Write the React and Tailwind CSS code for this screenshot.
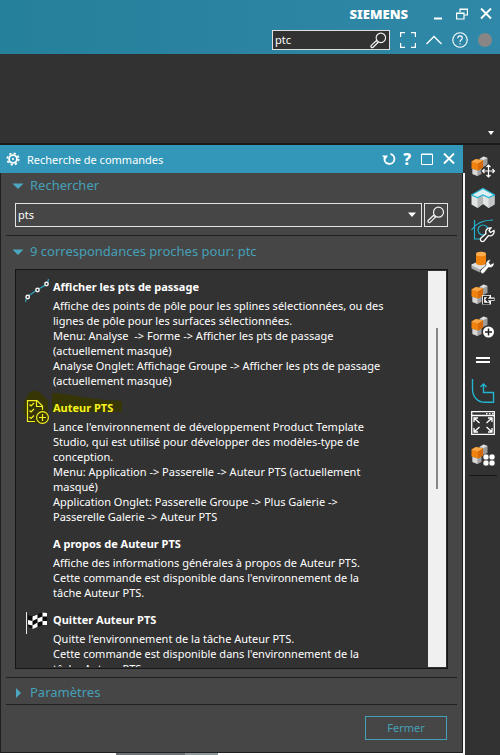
import React from "react";

const results = [
  {
    title: "Afficher les pts de passage",
    icon: "spline",
    lines: [
      "Affiche des points de pôle pour les splines sélectionnées, ou des",
      "lignes de pôle pour les surfaces sélectionnées.",
      "Menu: Analyse  -> Forme -> Afficher les pts de passage",
      "(actuellement masqué)",
      "Analyse Onglet: Affichage Groupe -> Afficher les pts de passage",
      "(actuellement masqué)",
    ],
  },
  {
    title: "Auteur PTS",
    icon: "author",
    marked: true,
    lines: [
      "Lance l'environnement de développement Product Template",
      "Studio, qui est utilisé pour développer des modèles-type de",
      "conception.",
      "Menu: Application -> Passerelle -> Auteur PTS (actuellement",
      "masqué)",
      "Application Onglet: Passerelle Groupe -> Plus Galerie ->",
      "Passerelle Galerie -> Auteur PTS",
    ],
  },
  {
    title: "A propos de Auteur PTS",
    lines: [
      "Affiche des informations générales à propos de Auteur PTS.",
      "Cette commande est disponible dans l'environnement de la",
      "tâche Auteur PTS.",
    ],
  },
  {
    title: "Quitter Auteur PTS",
    icon: "flag",
    lines: [
      "Quitte l'environnement de la tâche Auteur PTS.",
      "Cette commande est disponible dans l'environnement de la",
      "tâche Auteur PTS.",
    ],
  },
];

function Magnifier({ className }) {
  return (
    <svg className={className} viewBox="0 0 18 18" fill="none" stroke="#f2f2f2">
      <circle cx="11.5" cy="6.2" r="5" strokeWidth="1.2" />
      <path d="M7.2 8.8 L1.4 14.2 a1.2 1.2 0 0 0 1.9 1.9 L9 10.6" strokeWidth="1.3" />
      <path d="M6.6 9.8 L8.2 11.4" />
    </svg>
  );
}

function SplineIcon() {
  return (
    <svg className="h-6 w-6" viewBox="0 0 24 24" fill="none">
      <path d="M0.500 23 C1 19 2 18 3 17.500 C7 14 9 13 12.500 10.500 C16 8 19 8 21.500 5 C23 3 23.500 2 23.500 0" stroke="#2aa5bd" strokeWidth="1.3" />
      <g fill="#323232" stroke="#f4f4f4" strokeWidth="1.4">
        <circle cx="2.700" cy="18" r="1.700" />
        <circle cx="12.500" cy="11" r="1.700" />
        <circle cx="21.500" cy="5" r="1.700" />
      </g>
    </svg>
  );
}

function AuthorIcon() {
  return (
    <svg className="h-6 w-6" viewBox="0 0 24 24" fill="none" stroke="#f3f026" strokeWidth="1.2">
      <path d="M10 21.500 H2.500 V0.600 H12 L17.500 6 V10 M11.500 0.600 V6.500 H17.500" />
      <path d="M4.500 4.500 L6 6 L9 3 M4.500 10.500 L6 12 L9 9 M4.500 17 L6 18.500 L9 15.500" />
      <circle cx="17.500" cy="17.500" r="5.900" fill="#363505" />
      <path d="M17.500 14 V21 M14 17.500 H21" />
    </svg>
  );
}

function FlagIcon() {
  return (
    <svg className="h-6 w-6" viewBox="0 0 24 24">
      <path d="M1.500 0 V22" stroke="#e8e8e8" />
      <path d="M3 3 C8 7 15 -2 22 1 V13 C16 11 9 20 3 14Z" fill="#0c0c0c" />
      <g fill="#fff">
        <path d="M3 8 L7.500 9 V13.500 L3 12.500Z M7.500 4.500 L12.500 2.500 V6.500 L7.500 9Z M12.500 6.500 L17.500 4.500 V9 L12.500 10.500Z M17.500 0.500 L22 1 V4.500 L17.500 4.500Z M7.500 13.500 L12.500 10.500 V15 L7.500 17Z M17.500 9 L22 9 V13 L17.500 13Z" />
      </g>
    </svg>
  );
}

function ResultIcon({ name }) {
  if (name === "spline") return <SplineIcon />;
  if (name === "author") return <AuthorIcon />;
  if (name === "flag") return <FlagIcon />;
  return null;
}

function Block() {
  return (
    <g>
      <path d="M8.500 4 L12.500 1.500 L16.500 3 V10 L12 12 L8.500 10Z" fill="#9c9c9c" />
      <path d="M8.500 4 L12.500 1.500 L16.500 3 L12.500 5Z" fill="#dedede" />
      <path d="M1.500 13.500 L6.500 15.500 L10.500 13 V19 L6.500 21 L1.500 19Z" fill="#9f9f9f" />
      <path d="M1.500 13.500 L6.500 15.500 V21 L1.500 19Z" fill="#d6d6d6" />
      <path d="M0.500 6.500 L5 4 L12 5.500 V12.500 L7 15.500 L0.500 13.500Z" fill="#f0820f" />
      <path d="M0.500 6.500 L5 4 L12 5.500 L7 8.500Z" fill="#f9a54a" />
      <path d="M7 8.500 L12 5.500 V12.500 L7 15.500Z" fill="#d66a0a" />
    </g>
  );
}

const wrench = "M13 22 a2 2 0 0 1 -3 -3 L15 14.500 a4.200 4.200 0 0 1 5 -5.500 l-2 2.500 1.500 2 3.500 -2 a4.200 4.200 0 0 1 -5.500 5Z";
const moveArrows = "M17.500 10 V22 M11.500 16 H23.500 M15.500 12 L17.500 10 L19.500 12 M15.500 20 L17.500 22 L19.500 20 M13.500 14 L11.500 16 L13.500 18 M21.500 14 L23.500 16 L21.500 18";

const tools = [
  {
    label: "Déplacer la face",
    art: (
      <>
        <Block />
        <path d={moveArrows} fill="none" stroke="#323232" strokeWidth="3" />
        <path d={moveArrows} fill="none" stroke="#fff" strokeWidth="1.2" />
      </>
    ),
  },
  {
    label: "Surface",
    art: (
      <>
        <path d="M0.500 8 L12 1.500 L23.500 8 V17.500 L17.500 21 L12 17 L6.500 21 L0.500 17.500Z" fill="#e3e5e5" />
        <path d="M6.500 10.500 L12 8 V17 L6.500 21Z" fill="#b4b8b9" />
        <path d="M17.500 10.500 L23.500 8 V17.500 L17.500 21Z" fill="#c2c5c6" />
        <path d="M0.500 8 L12 1.500 L23.500 8 L17.500 10.500 L12 8 L6.500 10.500Z" fill="#dfeef1" stroke="#22b5d1" strokeWidth="1.2" />
      </>
    ),
  },
  {
    label: "Modifier la courbe",
    art: (
      <>
        <path d="M3.500 1 V20 H12 M0.500 11 C5 4 13 1 22 1" fill="none" stroke="#23b4d2" strokeWidth="1.2" />
        <circle cx="12" cy="11" r="5" fill="none" stroke="#23b4d2" strokeWidth="1.2" />
        <path d={wrench} fill="#323232" stroke="#fff" strokeWidth="1.3" />
      </>
    ),
  },
  {
    label: "Modifier la fonction",
    art: (
      <>
        <path d="M0.500 13.500 L8 10 L17 14 L9 19 L0.500 15Z" fill="#e0e0e0" />
        <path d="M0.500 14.500 L9 18.500 V21.500 L0.500 17.500Z" fill="#aaa" />
        <path d="M5 3 V12 C5 15 15 15 15 12 V3Z" fill="#ef820f" />
        <ellipse cx="10" cy="3" rx="5" ry="2.200" fill="#ffad4c" />
        <path d={wrench} fill="#fff" stroke="#323232" strokeWidth="0.700" />
      </>
    ),
  },
  {
    label: "Remplacer la face",
    art: (
      <>
        <Block />
        <path d="M11 12 H20 V14.500 H23.500 V18 H20 V21.500 H11Z" fill="#fff" />
        <path d="M18.500 13.500 H12.500 V20.500 H18.500 M23 16.500 H15 M17.500 14 L15 16.500 L17.500 19" fill="none" stroke="#222" strokeWidth="1.3" />
      </>
    ),
  },
  {
    label: "Ajouter",
    art: (
      <>
        <Block />
        <circle cx="17.500" cy="17" r="5.500" fill="#fff" />
        <path d="M17.500 13.500 V20.500 M14 17 H21" stroke="#222" strokeWidth="1.500" />
      </>
    ),
  },
  { label: "Égal", art: <path d="M5 11 H19 M5 15 H19" stroke="#fff" strokeWidth="2" /> },
  {
    label: "Esquisse",
    art: <path d="M1.500 0 V10 C1.500 18 7 23.300 14 23.300 H22.500 V13.500 H12.500 V5 M9.500 8 L12.500 5 L15.500 8" fill="none" stroke="#23b4d2" strokeWidth="1.4" />,
  },
  {
    label: "Plein écran",
    art: (
      <path d="M0.700 0.700 H23.300 V23.300 H0.700Z M0.700 4.500 H23.300 M15 2.600 H16.500 M18 2.600 H19.500 M21 2.600 H22.300 M3 11 V7 H7 M3 7 L8.500 12 M17 7 H21 V11 M21 7 L15.500 12 M3 17 V21 H7 M3 21 L8.500 16 M17 21 H21 V17 M21 21 L15.500 16" fill="none" stroke="#fff" strokeWidth="1.3" />
    ),
  },
  {
    label: "Réseau",
    art: (
      <>
        <Block />
        <g fill="#fff" stroke="#323232" strokeWidth="0.500">
          <circle cx="15" cy="14" r="3" /><circle cx="21" cy="14" r="3" />
          <circle cx="15" cy="20" r="3" /><circle cx="21" cy="20" r="3" />
        </g>
      </>
    ),
  },
];

function Header() {
  return (
    <header className="flex h-[54px] shrink-0 flex-col items-end bg-linear-to-r from-[#25809c] to-[#2f88a7]">
      <div className="flex h-7 items-center pr-2">
        <span className="pt-0.5 pr-6 text-[13px] font-black text-white">SIEMENS</span>
        <div className="flex items-center gap-3">
          <button aria-label="Réduire" className="h-3 w-3">
            <svg viewBox="0 0 12 12" className="h-3 w-3"><path d="M2 10.500 H10" stroke="#fff" strokeWidth="2" /></svg>
          </button>
          <button aria-label="Restaurer" className="h-3 w-3">
            <svg viewBox="0 0 12 12" className="h-3 w-3" fill="none" stroke="#fff" strokeWidth="1.2"><path d="M4 4 V1 H11.400 V7 H8.500 M0.600 5 H8 V11 H0.600Z M4 1.500 H11 M0.600 5.500 H8" /></svg>
          </button>
          <button aria-label="Fermer NX" className="h-3 w-3">
            <svg viewBox="0 0 12 12" className="h-3 w-3"><path d="M1 0.500 L11 10.500 M11 0.500 L1 10.500" stroke="#fff" strokeWidth="1.900" /></svg>
          </button>
        </div>
      </div>
      <div className="flex h-6 items-center pr-2">
        <div className="flex h-5 w-[118px] items-center border border-[#e0e0e0] bg-[#323232] pr-0.5">
          <input aria-label="Recherche rapide" defaultValue="ptc" className="w-0 flex-1 bg-transparent pl-0.5 text-[11px] text-white outline-none" />
          <button aria-label="Lancer la recherche"><Magnifier className="h-[17px] w-[17px]" /></button>
        </div>
        <button aria-label="Plein écran" className="ml-2.5">
          <svg viewBox="0 0 16 16" className="h-4 w-4"><path d="M0.600 5 V0.600 H5 M11 0.600 H15.400 V5 M15.400 11 V15.400 H11 M5 15.400 H0.600 V11" fill="none" stroke="#fff" strokeWidth="1.2" /></svg>
        </button>
        <button aria-label="Réduire le ruban" className="ml-2.5">
          <svg viewBox="0 0 16 16" className="h-4 w-4"><path d="M0.500 12 L8 4.500 L15.500 12" fill="none" stroke="#fff" strokeWidth="1.3" /></svg>
        </button>
        <button aria-label="Aide" className="ml-2.5">
          <svg viewBox="0 0 16 16" className="h-4 w-4" fill="none" stroke="#fff" strokeWidth="1.1"><circle cx="8" cy="8" r="7.200" /><path d="M5.800 6.200 C5.800 3 10.300 3.200 10.300 6 C10.300 7.800 8 7.800 8 10 M8 11.200 V12.500" /></svg>
        </button>
        <span className="ml-2.5 h-3.5 w-3.5 rounded-full bg-[#888586]" />
      </div>
    </header>
  );
}

function SectionHeading({ open, children }) {
  return (
    <button className="flex h-6 items-center gap-1.5 text-left text-[13px] text-[#45a0b8]" aria-expanded={open}>
      <svg className="h-3 w-3" viewBox="0 0 12 12" fill="#4ba8c0">
        {open ? <path d="M0.500 3.500 H11.500 L6 9Z" /> : <path d="M4 1 V11 L9 6Z" />}
      </svg>
      <span>{children}</span>
    </button>
  );
}

function Dialog() {
  return (
    <section aria-label="Recherche de commandes" className="flex min-w-0 flex-1 flex-col">
      <div className="mr-0.5 flex h-7 shrink-0 items-center bg-[#3297b9] pr-2 pl-1.5 text-white">
        <svg viewBox="0 0 16 16" className="h-3.5 w-3.5" fill="none" stroke="#fff">
          <circle cx="8" cy="8" r="4.500" strokeWidth="2" />
          <circle cx="8" cy="8" r="6.500" strokeWidth="2" strokeDasharray="2.550 2.550" />
          <circle cx="8" cy="8" r="0.800" fill="#fff" />
        </svg>
        <h1 className="ml-[7px] flex-1 pt-0.5 text-[11px]">Recherche de commandes</h1>
        <button aria-label="Réinitialiser">
          <svg viewBox="0 0 14 14" className="h-3.5 w-3.5" fill="none" stroke="#fff" strokeWidth="1.900"><path d="M8.500 2 A5 5 0 1 1 2.500 6" /><path d="M0 3.500 H6 L3.500 7.500Z" fill="#fff" stroke="none" /></svg>
        </button>
        <button aria-label="Aide du dialogue" className="ml-[7px] text-[16px] leading-5 font-extrabold">?</button>
        <button aria-label="Agrandir" className="ml-2.5">
          <svg viewBox="0 0 12 12" className="h-3 w-3"><path d="M0.500 1 H11.500 V11.500 H0.500Z M0.500 1.500 H11.500" fill="none" stroke="#fff" /></svg>
        </button>
        <button aria-label="Fermer le dialogue" className="ml-2.5">
          <svg viewBox="0 0 12 12" className="h-3 w-3"><path d="M1 0.500 L11 10.500 M11 0.500 L1 10.500" stroke="#fff" strokeWidth="1.900" /></svg>
        </button>
      </div>
      <div className="flex min-h-0 flex-1 flex-col border-r-2 border-[#f4f4f4]">
        <div className="flex min-h-0 flex-1 flex-col border border-t-0 border-[#202020] bg-[#464646] px-[5px] pb-3">
          <div className="flex shrink-0 flex-col border-b border-[#202020] px-1.5 pt-px pb-2">
            <SectionHeading open>Rechercher</SectionHeading>
            <div className="mt-[5px] flex gap-0.5 px-[3px]">
              <div className="flex h-6 flex-1 items-center border border-[#e4e4e4] pr-[5px]">
                <input aria-label="Texte recherché" defaultValue="pts" className="w-0 flex-1 bg-transparent pl-0.5 text-[11px] text-white outline-none" />
                <button aria-label="Recherches récentes">
                  <svg viewBox="0 0 8 6" className="h-1.5 w-2"><path d="M0 0.500 H8 L4 5Z" fill="#fff" /></svg>
                </button>
              </div>
              <button aria-label="Rechercher" className="flex h-6 w-6 items-center justify-center border border-[#e4e4e4]"><Magnifier className="h-[18px] w-[18px]" /></button>
            </div>
          </div>
          <div className="mt-1 flex min-h-0 flex-1 flex-col border-b border-[#202020] px-1.5 pb-2">
            <SectionHeading open>9 correspondances proches pour: ptc</SectionHeading>
            <div className="mx-[3px] mt-[5px] flex min-h-0 flex-1 border border-[#161616] bg-[#323232] p-px">
              <ul className="flex min-w-0 flex-1 flex-col gap-3 overflow-hidden pt-2 pl-2">
                {results.map((r) => (
                  <li key={r.title} className="relative flex shrink-0 gap-1 text-[11px] leading-[15px] text-white">
                    {r.marked && (
                      <svg className="absolute -top-4 -left-1 h-11 w-28" viewBox="0 0 112 44" fill="#363505">
                        <path d="M6 12 C9 5 18 5 22 12 L27 16 V36 C20 42 8 40 4 31 C1 25 3 17 6 12Z M31 9 C55 10 60 15 101 17 V28 H31Z" />
                      </svg>
                    )}
                    <div className="relative w-6 shrink-0"><ResultIcon name={r.icon} /></div>
                    <div className="relative">
                      <h2 className={r.marked ? "font-bold text-[#f7f420]" : "font-bold"}>{r.title}</h2>
                      <p className="mt-1 whitespace-pre">{r.lines.join("\n")}</p>
                    </div>
                  </li>
                ))}
              </ul>
              <div className="w-[18px] shrink-0 bg-[#f0f0f0] pt-[57px]">
                <div className="mx-auto h-[161px] w-0.5 bg-[#868686]" />
              </div>
            </div>
          </div>
          <div className="flex h-[27px] shrink-0 items-center border-b border-[#202020] px-1.5 pt-1">
            <SectionHeading open={false}>Paramètres</SectionHeading>
          </div>
          <button className="mt-[11px] mr-2.5 h-6 w-[82px] shrink-0 self-end border border-[#45a0b8] text-[11px] text-[#45a0b8]">Fermer</button>
        </div>
        <div className="flex h-0.5 shrink-0 bg-white">
          <div className="ml-[25%] w-[15%] bg-[#6f7577]" />
          <div className="w-[7%] bg-[#8f9a9c]" />
        </div>
      </div>
    </section>
  );
}

export default function App() {
  return (
    <div className="flex h-screen flex-col overflow-hidden bg-[#323232] font-['Noto_Sans','Open_Sans',sans-serif]">
      <Header />
      <div className="flex h-[91px] shrink-0 items-end justify-end border-b-2 border-[#1a1a1a] pr-1.5 pb-2">
        <button aria-label="Options du ruban"><svg viewBox="0 0 6 4" className="h-1 w-1.5"><path d="M0 0 H6 L3 4Z" fill="#fff" /></svg></button>
      </div>
      <main className="flex min-h-0 flex-1">
        <Dialog />
        <nav aria-label="Outils" className="flex w-[35px] shrink-0 flex-col items-center gap-2 pt-2.5">
          {tools.map((t) => (
            <button key={t.label} aria-label={t.label} className="h-6 w-6 shrink-0">
              <svg viewBox="0 0 24 24" className="h-6 w-6">{t.art}</svg>
            </button>
          ))}
          <hr className="w-7 border-[#161616]" />
        </nav>
      </main>
    </div>
  );
}
